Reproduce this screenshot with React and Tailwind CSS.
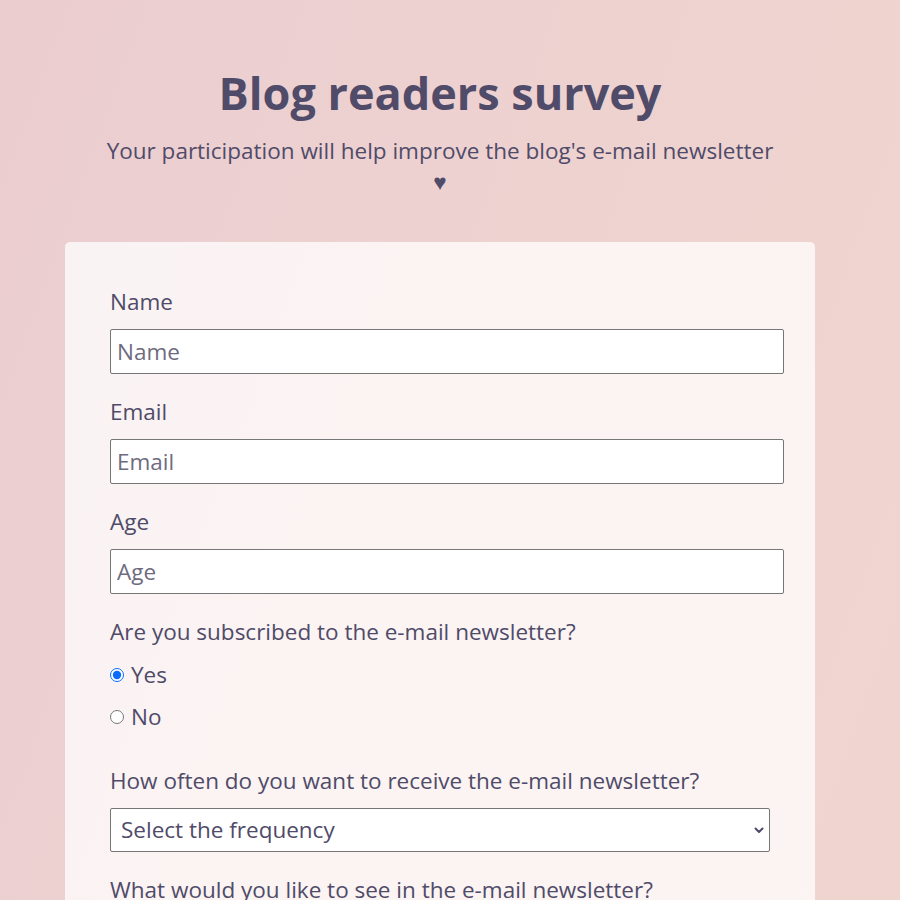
import React from 'react';

const fields = [
  { id: 'name', label: 'Name', type: 'text' },
  { id: 'email', label: 'Email', type: 'email' },
  { id: 'age', label: 'Age', type: 'number' },
];

export default function App() {
  return (
    <div
      className="min-h-[900px] w-full overflow-hidden bg-[linear-gradient(110deg,#ebcdd0_0%,#eed2d0_50%,#f0d5cf_100%)] text-[#4f4b69]"
      style={{ fontFamily: '"Open Sans", "Noto Sans", sans-serif' }}
    >
      <div className="w-[880px] pt-[66px]">
        <header className="mx-auto w-[680px] text-center">
          <h1 className="text-[45px] font-bold leading-[54px]">Blog readers survey</h1>
          <p className="mt-[15px] text-[22.5px] leading-[31px]">
            Your participation will help improve the blog's e-mail newsletter ♥
          </p>
        </header>

        <main className="mx-auto mt-[45px] w-[750px] rounded-[5px] bg-white/75 px-[45px] pt-[43px] pb-10">
          <form className="flex flex-col">
            {fields.map((f, i) => (
              <div key={f.id} className={i > 0 ? 'mt-[21px]' : ''}>
                <label htmlFor={f.id} className="block text-[22.5px] leading-[34px]">
                  {f.label}
                </label>
                <input
                  id={f.id}
                  type={f.type}
                  placeholder={f.label}
                  className="mt-[10px] box-content block h-[31px] w-full rounded-[2px] border border-[#767676] bg-white px-[6px] py-[6px] text-[22.5px] leading-[31px] text-[#4f4b69] placeholder:text-[#6e6b80] outline-none"
                />
              </div>
            ))}

            <div className="mt-[21px]">
              <p className="text-[22.5px] leading-[34px]">Are you subscribed to the e-mail newsletter?</p>
              <label className="mt-[9px] flex items-center text-[22.5px] leading-[34px]">
                <input type="radio" name="sub" defaultChecked className="m-0 mr-[7px] h-[14px] w-[14px] accent-[#0b6bff]" />
                Yes
              </label>
              <label className="mt-[8px] flex items-center text-[22.5px] leading-[34px]">
                <input type="radio" name="sub" className="m-0 mr-[7px] h-[14px] w-[14px]" />
                No
              </label>
            </div>

            <div className="mt-[30px]">
              <p className="text-[22.5px] leading-[34px]">How often do you want to receive the e-mail newsletter?</p>
              <div className="relative mt-[10px] w-[660px]">
                <select className="block h-[44px] w-full appearance-none rounded-[2px] border border-[#767676] bg-white pl-[10px] text-[22.5px] text-[#4f4b69] outline-none">
                  <option>Select the frequency</option>
                  <option>Weekly</option>
                  <option>Monthly</option>
                </select>
                <svg
                  className="pointer-events-none absolute right-[5px] top-[16px] h-[12px] w-[12px]"
                  viewBox="0 0 12 12"
                  fill="none"
                  stroke="#4f4b69"
                  strokeWidth="2"
                  strokeLinecap="round"
                  strokeLinejoin="round"
                >
                  <path d="M2.5 4.5l3.5 3.5 3.5-3.5" />
                </svg>
              </div>
            </div>

            <div className="mt-[21px]">
              <p className="text-[22.5px] leading-[34px]">What would you like to see in the e-mail newsletter?</p>
            </div>
          </form>
        </main>
      </div>
    </div>
  );
}
